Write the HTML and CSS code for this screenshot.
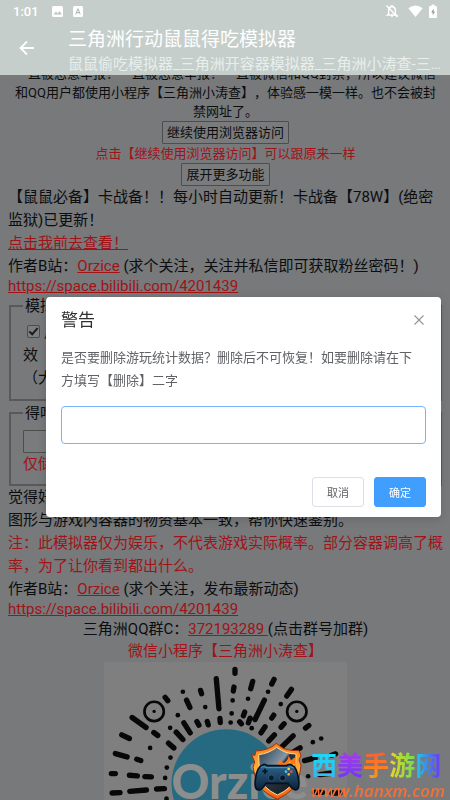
FILE: index.html
```html
<!DOCTYPE html>
<html lang="zh-CN">
<head>
<meta charset="utf-8">
<meta name="viewport" content="width=device-width, initial-scale=1">
<title>三角洲行动鼠鼠得吃模拟器</title>
<link rel="stylesheet" href="styles.css">
</head>
<body>
<header class="topbar">
  <div class="status">
    <span class="clock">1:01</span>
    <svg class="status-icon" viewBox="0 0 12 12" width="12" height="12" aria-hidden="true"><rect x="1" y="1" width="11" height="11" rx="1.5" fill="#fff"/><path d="M2.5 9.5 5 6.5l1.7 2L8.5 6l2.5 3.5z" fill="#bcc6c2"/></svg>
    <svg class="status-icon" viewBox="0 0 12 12" width="12" height="12" aria-hidden="true"><rect x="1" y="1" width="10" height="11" rx="1.5" fill="#fff"/><path d="M3.8 9.3 6 3.7l2.2 5.6M4.6 7.6h2.8" fill="none" stroke="#aeb8b4" stroke-width="1"/></svg>
    <span class="grow"></span>
    <svg class="status-icon bell" viewBox="0 0 14 14" width="14" height="14" aria-hidden="true"><path d="M3.600 10.300V6.500C3.600 4.400 4.800 3 6.300 2.700V2h1.400v.7c1.500.3 2.700 1.700 2.700 3.800v3.800l1 .7H2.600zM6 12h2M1.500 1.500l11 11.500" fill="none" stroke="#fff" stroke-width="1.400"/></svg>
    <svg class="status-icon wifi" viewBox="0 0 15 12" width="15" height="12" aria-hidden="true"><path d="M.3 3.300Q7.500-2.300 14.700 3.300L7.500 12z" fill="#fff"/></svg>
    <svg class="status-icon" viewBox="0 0 8 14" width="8" height="14" aria-hidden="true"><path d="M2.500.500h3V2H7q1 0 1 1v10q0 1-1 1H1q-1 0-1-1V3q0-1 1-1h1.500z" fill="#fff"/><path d="M4.600 4.500 2.300 8.500h1.400v3L5.900 7.500H4.600z" fill="#8f9a96"/></svg>
  </div>
  <div class="titlebar">
    <button class="back" type="button" aria-label="返回"><svg viewBox="0 0 16 16" width="16" height="16"><path d="M15 8H2M8 1.500 1.500 8 8 14.500" fill="none" stroke="#fff" stroke-width="1.800"/></svg></button>
    <div class="titles">
      <h1 class="title">三角洲行动鼠鼠得吃模拟器</h1>
      <p class="subtitle">鼠鼠偷吃模拟器_三角洲开容器模拟器_三角洲小涛查-三角洲</p>
    </div>
  </div>
</header>

<main class="page">
  <section class="notice">
    <p>一直被恶意举报！一直被恶意举报！一直被微信和QQ封禁，所以建议微信和QQ用户都使用小程序【三角洲小涛查】，体验感一模一样。也不会被封禁网址了。</p>
    <button class="plain" type="button">继续使用浏览器访问</button>
    <p class="red">点击【继续使用浏览器访问】可以跟原来一样</p>
    <button class="plain" type="button">展开更多功能</button>
  </section>
  <p>【鼠鼠必备】卡战备！！每小时自动更新！卡战备【78W】(绝密监狱)已更新！</p>
  <p><a href="#check">点击我前去查看！</a></p>
  <p>作者B站：<a href="#author">Orzice</a> (求个关注，关注并私信即可获取粉丝密码！)</p>
  <p class="url"><a href="#space">https://space.bilibili.com/4201439</a></p>
  <fieldset>
    <legend>模拟</legend>
    <label class="option"><input type="checkbox" checked>启</label>
    <p>效</p>
    <p>（大</p>
  </fieldset>
  <fieldset class="scores">
    <legend>得吃</legend>
    <button class="plain stat" type="button" aria-label="得吃"></button>
    <p class="red">仅储</p>
  </fieldset>
  <p>觉得好</p>
  <p>图形与游戏内容器的物资基本一致，帮你快速鉴别。</p>
  <p class="red">注：此模拟器仅为娱乐，不代表游戏实际概率。部分容器调高了概率，为了让你看到都出什么。</p>
  <p>作者B站：<a href="#author">Orzice</a> (求个关注，发布最新动态)</p>
  <p class="url"><a href="#space">https://space.bilibili.com/4201439</a></p>
  <section class="contact">
    <p>三角洲QQ群C：<a href="#group">372193289 </a>(点击群号加群)</p>
    <p class="red">微信小程序【三角洲小涛查】</p>
    <svg class="code" viewBox="42 36 729 729" role="img" aria-label="三角洲小涛查">
      <rect x="42" y="36" width="729" height="729" fill="#7f7f7f"/>
      <circle cx="408" cy="401" r="164" fill="#256a80"/>
      <text x="244" y="445" class="code-name">Orzice</text>
      <g fill="none" stroke="#080808" stroke-width="8"><circle cx="192" cy="184" r="29"/><circle cx="619" cy="184" r="29"/></g>
      <g fill="none" stroke="#080808" stroke-width="16" stroke-linecap="round">
        <path d="M434 58v12M378 86l8 90M431 111l-2 12M487 94l-6 22M551 88l-7 14M603 118l-14 20M331 121l3 10M225 142l8 10M289 150l10 22M522 150l-28 58M463 186l-4 11M126 202l42 30M95 254l23 11M76 310l35 10M140 327l12 4M64 370h12M118 375l24 2M164 379l20 1M66 428l24-1M119 423l50-4M199 416l24-1M191 247l12 9M235 279l16 14M258 246l20 22M281 218l19 30M320 214l6 11M351 214l3 10M389 205l1 12M448 215l5 6M479 204l-5 14M524 230l-12 18M552 254l-17 18M581 221l-9 10M608 257l-34 33M655 226l-10 8M629 293l-22 13M674 323l-32 8M735 311l-12 4M550 195l-6 9M688 373l32-4M724 428h24M672 426h24"/>
      </g>
      <g fill="#080808"><circle cx="278" cy="125" r="7"/><circle cx="345" cy="171" r="7"/><circle cx="263" cy="195" r="7"/><circle cx="240" cy="233" r="7"/><circle cx="180" cy="293" r="7"/><circle cx="241" cy="322" r="7"/><circle cx="230" cy="352" r="7"/><circle cx="225" cy="383" r="7"/><circle cx="229" cy="445" r="7"/><circle cx="427" cy="151" r="7"/><circle cx="424" cy="190" r="7"/><circle cx="421" cy="217" r="7"/><circle cx="473" cy="146" r="7"/><circle cx="533" cy="125" r="7"/><circle cx="571" cy="162" r="7"/><circle cx="484" cy="234" r="7"/><circle cx="667" cy="276" r="7"/><circle cx="692" cy="265" r="7"/><circle cx="653" cy="378" r="7"/><circle cx="192" cy="184" r="5"/><circle cx="619" cy="184" r="5"/></g>
    </svg>
  </section>
</main>

<div class="overlay">
  <form class="dialog" role="dialog" aria-labelledby="dialog-title">
    <div class="dialog-head">
      <h2 id="dialog-title">警告</h2>
      <button class="close" type="button" aria-label="关闭"><svg viewBox="0 0 12 12" width="12" height="12"><path d="m1.500 1.500 9 9m0-9-9 9" fill="none" stroke="#909399" stroke-width="1.100"/></svg></button>
    </div>
    <label class="message" for="confirm">是否要删除游玩统计数据？删除后不可恢复！如要删除请在下方填写【删除】二字</label>
    <input id="confirm" class="field" type="text">
    <div class="actions">
      <button class="btn" type="button">取消</button>
      <button class="btn primary" type="button">确定</button>
    </div>
  </form>
</div>

<aside class="brand">
  <svg viewBox="40 34 156 174" width="52" height="58" aria-hidden="true">
    <defs>
      <linearGradient id="fire" x1="0" y1="0" x2="0" y2="1"><stop offset="0" stop-color="#ff7a1c"/><stop offset=".5" stop-color="#ffb13a"/><stop offset="1" stop-color="#f4570c"/></linearGradient>
      <linearGradient id="steel" x1="0" y1="0" x2="1" y2="1"><stop offset="0" stop-color="#26394b"/><stop offset=".45" stop-color="#8598a8"/><stop offset=".5" stop-color="#26323e"/><stop offset="1" stop-color="#101820"/></linearGradient>
      <linearGradient id="pad" x1="0" y1="0" x2="0" y2="1"><stop offset="0" stop-color="#2c6790"/><stop offset="1" stop-color="#0c2036"/></linearGradient>
    </defs>
    <path d="M116 38 138 54Q162 61 184 60L190 74 184 88 190 104 184 145Q173 179 119 206 65 181 55 148L46 110 51 94 42 72 52 74 54 61Q92 60 116 38z" fill="url(#fire)" stroke="#983311" stroke-width="3"/>
    <path d="M117 50Q144 70 175 70L173 140Q163 174 119 193 75 172 66 140L63 72Q94 68 117 50z" fill="url(#steel)" stroke="#ffe08a" stroke-width="3"/>
    <path d="M112 108Q126 99 124 84L137 98Q151 91 153 75L160 89 173 79Q169 93 176 106L174 122H104z" fill="#ff7718"/>
    <path d="M127 111 137 101 145 105 157 92 160 103 171 101 168 116H120z" fill="#ffd347"/>
    <path d="M75 103Q81 98 89 105H147Q155 98 163 104 178 109 183 148 187 177 174 178 165 178 151 158H85Q73 178 63 178 49 177 53 147 57 109 75 103z" fill="url(#pad)" stroke="#07111d" stroke-width="5"/>
    <path d="M70 110Q78 105 87 111H149Q159 105 168 112" fill="none" stroke="#489bc1" stroke-width="3"/>
    <path d="M82 114v16M74 122h16" stroke="#081929" stroke-width="6"/>
    <circle cx="101" cy="142" r="9" fill="#0a1724" stroke="#3a6b8c" stroke-width="2"/><circle cx="135" cy="142" r="9" fill="#0a1724" stroke="#3a6b8c" stroke-width="2"/>
    <circle cx="153" cy="115" r="4" fill="#ffd23b"/><circle cx="145" cy="123" r="4" fill="#4ac8f5"/><circle cx="161" cy="123" r="4" fill="#ff4b38"/><circle cx="153" cy="131" r="4" fill="#ffae29"/>
  </svg>
  <div class="brand-text">
    <strong class="brand-name"><span class="c1">西</span><span class="c2">美</span><span class="c3">手</span><span class="c4">游</span><span class="c5">网</span></strong>
    <span class="brand-url">www.hanxm.com</span>
  </div>
</aside>
</body>
</html>
```
FILE: styles.css
```css
* {
  box-sizing: border-box;
}

html,
body {
  height: 100%;
  overflow: hidden;
}

body {
  margin: 0;
  background: #77797b;
  color: #0c0d0e;
  font-family: Roboto, "Noto Sans CJK SC", sans-serif;
  font-size: 15px;
  text-spacing-trim: space-all;
}

p,
h1,
h2 {
  margin: 0;
  font-weight: 400;
}

button,
input {
  font-family: inherit;
}

.topbar {
  position: fixed;
  top: 0;
  left: 0;
  right: 0;
  z-index: 3;
  height: 75px;
  background: #c5cecb;
  color: #fff;
}

.status {
  display: flex;
  align-items: center;
  height: 22px;
  padding: 0 13px;
}

.clock {
  width: 38px;
  font-size: 13px;
  font-weight: 500;
}

.status-icon {
  margin-right: 9px;
}

.status-icon:last-child {
  margin-right: 0;
}

.wifi {
  margin-right: 6px;
}

.grow {
  flex: 1;
}

.titlebar {
  display: flex;
  align-items: flex-start;
  padding: 4px 8px 0 0;
}

.back {
  width: 68px;
  height: 44px;
  padding: 0 0 0 19px;
  border: 0;
  background: none;
  text-align: left;
}

.back svg {
  display: block;
}

.titles {
  flex: 1;
  min-width: 0;
}

.title {
  font-size: 19px;
  line-height: 27px;
}

.subtitle {
  overflow: hidden;
  color: #e8eeeb;
  font-size: 15px;
  line-height: 22px;
  text-overflow: ellipsis;
  white-space: nowrap;
}

.page {
  padding: 64px 7px 0 8px;
  line-height: 23px;
}

.notice {
  display: flex;
  flex-direction: column;
  align-items: center;
  padding: 0 4px;
  font-size: 13px;
  line-height: 19px;
  text-align: center;
}

.plain {
  height: 23px;
  padding: 0 4px;
  border: 1px solid #4c4d4e;
  border-radius: 1px;
  background: #7a7b7c;
  color: #0c0d0e;
  font-size: 13px;
  line-height: 19px;
}

.red,
a {
  color: #a01317;
}

.url {
  line-height: 17px;
}

fieldset {
  margin: 0 1px;
  padding: 4px 12px 9px;
  border: 2px solid #57595b;
}

legend {
  padding: 0 2px;
  line-height: 22px;
}

.scores {
  margin-top: 1px;
  padding: 6px 12px 8px;
}

.option {
  display: flex;
  align-items: flex-start;
  gap: 4px;
}

.option input {
  appearance: none;
  width: 13px;
  height: 13px;
  margin: 4px 0 0 4px;
  border: 1px solid #4c4d4e;
  border-radius: 2px;
  background: #7d7e7f;
}

.option input:checked::before {
  content: "";
  display: block;
  box-sizing: border-box;
  width: 5px;
  height: 9px;
  margin: 0 0 0 3px;
  border: solid #1b1c1d;
  border-width: 0 2px 2px 0;
  transform: rotate(42deg);
}

.stat {
  display: block;
  width: 80px;
}

.contact {
  text-align: center;
  line-height: 22px;
}

.code {
  display: block;
  width: 56%;
  margin: 0 auto;
}

.code-name {
  fill: #8c8d8d;
  font-family: "Liberation Sans Narrow", Lato, sans-serif;
  font-size: 140px;
  font-weight: 900;
}

.overlay {
  position: fixed;
  inset: 0;
  z-index: 2;
  display: flex;
  align-items: center;
  padding: 14px 9px 0 46px;
}

.dialog {
  width: 100%;
  padding: 9px 15px 10px;
  border-radius: 4px;
  background: #fff;
  box-shadow: 0 2px 10px rgba(0, 0, 0, .15);
}

.dialog-head {
  display: flex;
  align-items: center;
  justify-content: space-between;
}

.dialog-head h2 {
  color: #303133;
  font-size: 17px;
  line-height: 25px;
}

.close {
  height: 28px;
  padding: 0 1px;
  border: 0;
  background: none;
}

.close svg {
  display: block;
}

.message {
  display: block;
  padding: 12px 12px 14px 0;
  color: #606266;
  font-size: 13px;
  line-height: 23px;
}

.field {
  display: block;
  width: 100%;
  height: 38px;
  padding: 0 15px;
  border: 1px solid #76b5fa;
  border-radius: 4px;
  background: #fff;
  outline: 0;
}

.actions {
  display: flex;
  justify-content: flex-end;
  gap: 10px;
  padding-top: 33px;
}

.btn {
  width: 52px;
  height: 30px;
  padding: 0;
  border: 1px solid #dcdfe6;
  border-radius: 3px;
  background: #fff;
  color: #606266;
  font-size: 11px;
}

.primary {
  border-color: #409eff;
  background: #409eff;
  color: #fff;
}

.brand {
  position: fixed;
  right: 5px;
  bottom: 0;
  z-index: 4;
  display: flex;
  align-items: flex-end;
  gap: 8px;
}

.brand-text {
  display: flex;
  flex-direction: column;
}

.brand-name {
  font-size: 26px;
  font-weight: 700;
  line-height: 32px;
}

.brand-name span {
  background-clip: text;
  color: transparent;
}

.c1 {
  background-image: linear-gradient(#18dcf5, #35b4f5);
}

.c2 {
  background-image: linear-gradient(#a83bee, #6f36f5);
}

.c3 {
  background-image: linear-gradient(#ff5b2c, #ff9a1c);
}

.c4 {
  background-image: linear-gradient(90deg, #f5d321, #6be04a);
}

.c5 {
  background-image: linear-gradient(90deg, #17d2e8, #6a37f2);
}

.brand-url {
  color: #f2713a;
  font-family: "Open Sans", sans-serif;
  font-size: 17px;
  font-style: italic;
  font-weight: 600;
  line-height: 18px;
}
```
